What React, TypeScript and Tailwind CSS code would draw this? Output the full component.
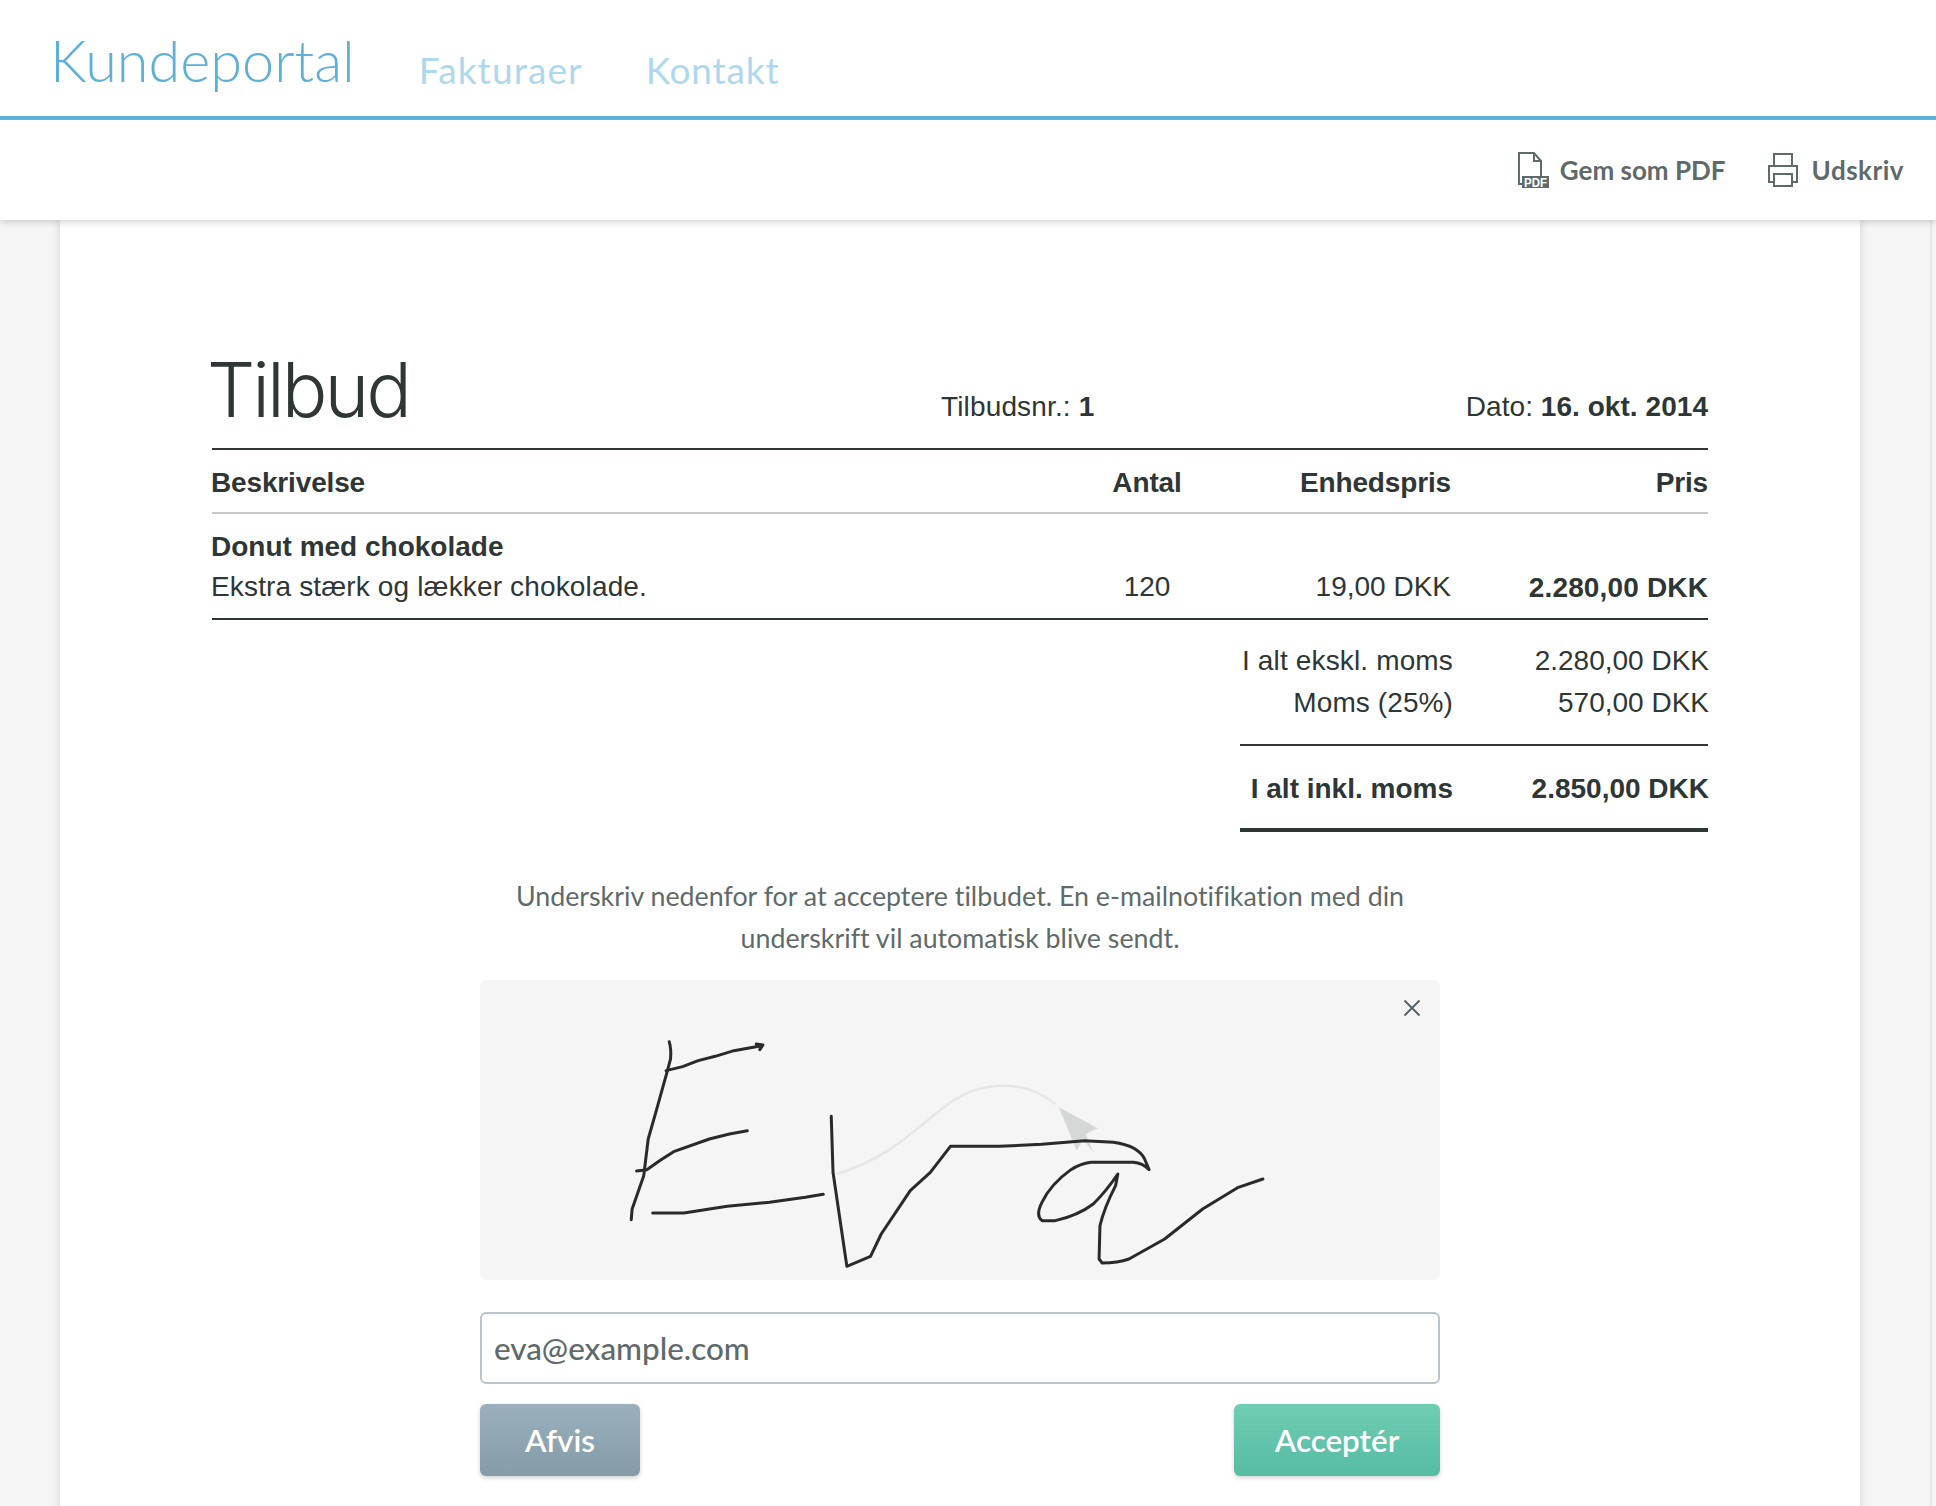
const sig = [
  "M155 128 Q160 150 158 180 L150 220 L125 340 L108 420 L98 530 L72 630 L70 662",
  "M148 215 L185 203 L220 185 L258 172 L300 155 L362 140 M350 135 L365 138 L358 152",
  "M82 516 L105 512 L135 484 L165 458 L245 420 L290 405 L330 395",
  "M118 642 L188 642 L285 622 L380 610 L460 595 L500 586",
  "M518 352 L522 520 L553 802 L606 772 L630 705 L695 575 L740 520 L785 442 L895 442 L990 436 L1085 425 L1150 430 Q1205 440 1220 480 L1230 512 Q1215 492 1195 490 L1100 490 Q1075 495 1055 512 Q1010 555 990 610 Q975 650 990 665 L1020 665 Q1070 650 1105 615 Q1135 575 1160 525 L1155 560 Q1130 625 1120 680 L1118 780 L1125 792 Q1160 792 1185 780 L1265 720 L1350 630 L1430 565 L1485 540",
];

function PdfIcon() {
  return (
    <svg width="31" height="36" viewBox="0 0 31 36" className="shrink-0">
      <path d="M23 25V9l-7-8H1v31h3" fill="none" stroke="#5f6a6a" strokeWidth="2" />
      <path d="M16 1v8h7" fill="none" stroke="#5f6a6a" strokeWidth="2" />
      <rect x="4" y="24" width="27" height="12" fill="#5f6a6a" />
      <text x="17.5" y="34.5" textAnchor="middle" textLength="23" lengthAdjust="spacingAndGlyphs" fill="#fff" fontSize="13" fontWeight="700" fontFamily="Liberation Sans, sans-serif">PDF</text>
    </svg>
  );
}

function PrintIcon() {
  return (
    <svg width="30" height="34" viewBox="0 0 30 34" className="block shrink-0" fill="none" stroke="#5f6a6a" strokeWidth="2">
      <path d="M6 13V1h18v12" />
      <path d="M6 29H1V13h28v16h-5" />
      <rect x="6" y="21" width="18" height="12" />
    </svg>
  );
}

export default function App() {
  return (
    <div className="relative h-[1506px] overflow-hidden bg-[#f5f5f5] font-['Liberation_Sans',sans-serif] text-[28px] leading-[42px] text-[#2f3636]">
      <div className="absolute top-[220px] bottom-0 right-[4px] w-[2px] bg-[#e6e6e6]" />
      <header className="relative z-10 bg-white shadow-[0_1px_8px_rgba(0,0,0,0.22)]">
        <div className="flex h-[120px] items-baseline border-b-4 border-[#5eb0d9] pl-[50px] pt-[24px] font-['Lato',sans-serif]">
          <span className="text-[57.6px] leading-[72px] font-light text-[#5eb0d9]">Kundeportal</span>
          <span className="ml-[64px] translate-y-[2px] text-[37px] tracking-[1.1px] text-[#aed8ee]">Fakturaer</span>
          <span className="ml-[63px] translate-y-[2px] text-[37px] tracking-[0.8px] text-[#aed8ee]">Kontakt</span>
        </div>
        <div className="flex h-[100px] items-center justify-end pr-[32px] font-['Lato',sans-serif] text-[26px] font-bold text-[#5f6a6a]">
          <PdfIcon />
          <span className="ml-[11px]">Gem som PDF</span>
          <span className="ml-[42px]"><PrintIcon /></span>
          <span className="ml-[14px] tracking-[0.5px]">Udskriv</span>
        </div>
      </header>

      <main className="h-full w-[1800px] ml-[60px] bg-white px-[152px] shadow-[0_0_8px_rgba(0,0,0,0.14)]">
        <div className="w-[1496px]">
          <div className="flex h-[228px] items-end">
            <div className="flex w-full items-baseline pb-[16px]">
              <h1 className="-ml-[5px] w-[734px] translate-y-[1px] font-['Inter',sans-serif] text-[76px] leading-[88px] font-light tracking-[-3px]">Tilbud</h1>
              <div className="tracking-[0.15px]">Tilbudsnr.: <b className="tracking-[0.5px]">1</b></div>
              <div className="ml-auto tracking-[0.05px]">Dato: <b>16. okt. 2014</b></div>
            </div>
          </div>

          <div className="grid grid-cols-[883px_104px_252px_257px] border-t-2 border-[#2f3636]">
            <div className="col-span-4 grid grid-cols-subgrid border-b-2 border-[#c8c8c8] pt-[12px] pb-[8px] font-bold tracking-[-0.15px]">
              <div className="-ml-[1px]">Beskrivelse</div>
              <div className="text-center">Antal</div>
              <div className="text-right">Enhedspris</div>
              <div className="text-right">Pris</div>
            </div>
            <div className="col-span-4 grid grid-cols-subgrid border-b-2 border-[#2f3636] pt-[13px] pb-[10px]">
              <div className="-ml-[1px]">
                <div className="font-bold leading-[39px]">Donut med chokolade</div>
                <div className="tracking-[0.15px]">Ekstra stærk og lækker chokolade.</div>
              </div>
              <div className="self-end text-center">120</div>
              <div className="self-end text-right">19,00 DKK</div>
              <div className="-mb-[1px] self-end text-right font-bold tracking-[0.15px]">2.280,00 DKK</div>
            </div>
          </div>

          <div className="ml-auto mt-[20px] w-[468px]">
            <div className="grid grid-cols-[213px_256px]">
              <div className="text-right tracking-[0.15px]">I alt ekskl. moms</div>
              <div className="text-right">2.280,00 DKK</div>
              <div className="text-right tracking-[0.1px]">Moms (25%)</div>
              <div className="text-right">570,00 DKK</div>
            </div>
            <div className="mt-[20px] grid grid-cols-[213px_256px] border-t-2 border-[#2f3636] pt-[22px] font-bold">
              <div className="text-right">I alt inkl. moms</div>
              <div className="text-right">2.850,00 DKK</div>
            </div>
            <div className="mt-[18px] h-[4px] bg-[#2f3636]" />
          </div>

          <p className="mt-[43px] text-center font-['Lato',sans-serif] text-[26.8px] text-[#5f6a6a] [font-variant-ligatures:none]">
            Underskriv nedenfor for at acceptere tilbudet. En e-mailnotifikation med din<br />
            underskrift vil automatisk blive sendt.
          </p>

          <div className="mx-auto mt-[21px] w-[960px]">
            <div className="h-[300px] rounded-[6px] bg-[#f5f5f5]">
              <svg className="block h-full w-full" viewBox="480 981 960 300" fill="none">
                <g transform="translate(600 1000) scale(0.4464 0.3333)">
                  <path d="M530 525 C 640 480 690 410 770 325 C 850 240 950 240 1020 315" stroke="#e6e6e6" strokeWidth="2.5" vectorEffect="non-scaling-stroke" />
                  <path d="M1028 325 L1115 388 L1088 405 L1105 460 L1082 420 L1068 455 Z" fill="#d6d8d7" />
                  {sig.map((d) => (
                    <path key={d} d={d} stroke="#2a2a2a" strokeWidth="3" strokeLinejoin="round" strokeLinecap="round" vectorEffect="non-scaling-stroke" />
                  ))}
                </g>
                <path d="M1404.5 1001.5 L1419.5 1016.5 M1419.5 1001.5 L1404.5 1016.5" stroke="#4f6068" strokeWidth="1.8" />
              </svg>
            </div>
            <div className="mt-[32px] flex h-[72px] items-center rounded-[6px] border-2 border-[#b8c5ce] bg-white pl-[12px] font-['Lato',sans-serif] text-[31.4px] font-medium text-[#5f6a6a] shadow-[inset_0_2px_2px_rgba(0,0,0,0.03)]">
              eva@example.com
            </div>
            <div className="mt-[20px] flex justify-between font-['Lato',sans-serif] text-[31.4px] font-semibold text-white">
              <button className="h-[72px] w-[160px] rounded-[6px] bg-gradient-to-b from-[#9bb0bc] to-[#849ba8] shadow-[0_2px_4px_rgba(0,0,0,0.18)]">Afvis</button>
              <button className="h-[72px] w-[206px] rounded-[6px] bg-gradient-to-b from-[#6fcdb3] to-[#56bca2] shadow-[0_2px_4px_rgba(0,0,0,0.18)]">Acceptér</button>
            </div>
          </div>
        </div>
      </main>
    </div>
  );
}
